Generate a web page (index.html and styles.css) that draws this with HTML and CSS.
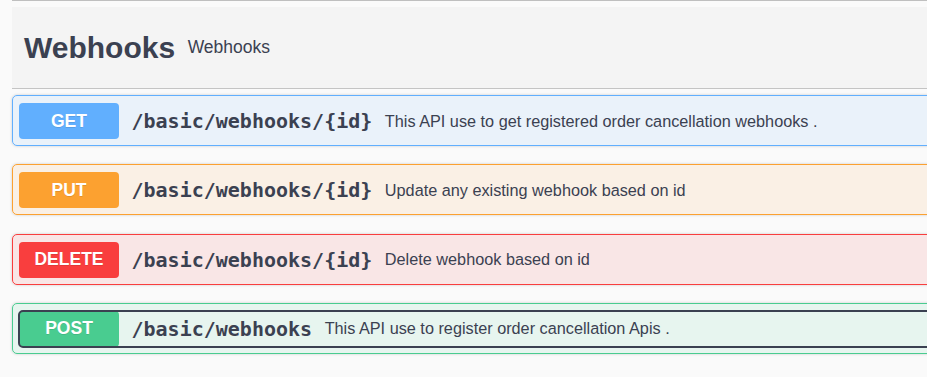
FILE: index.html
```html
<!DOCTYPE html>
<html lang="en">
<head>
  <meta charset="UTF-8">
  <meta name="viewport" content="width=device-width, initial-scale=1.0">
  <title>Webhooks</title>
  <link rel="stylesheet" href="styles.css">
</head>
<body>
  <div class="wrapper">
    <!-- end of previous tag section -->
    <div class="divider"></div>

    <!-- Tag header -->
    <div class="tag">
      <h4 class="tag-title">Webhooks</h4>
      <small class="tag-desc">Webhooks</small>
    </div>

    <!-- Operations -->
    <div class="operations">
      <div class="opblock get">
        <div class="summary">
          <span class="method">GET</span>
          <span class="path">/basic/webhooks/{id}</span>
          <span class="desc">This API use to get registered order cancellation webhooks .</span>
        </div>
      </div>

      <div class="opblock put">
        <div class="summary">
          <span class="method">PUT</span>
          <span class="path">/basic/webhooks/{id}</span>
          <span class="desc">Update any existing webhook based on id</span>
        </div>
      </div>

      <div class="opblock delete">
        <div class="summary">
          <span class="method">DELETE</span>
          <span class="path">/basic/webhooks/{id}</span>
          <span class="desc">Delete webhook based on id</span>
        </div>
      </div>

      <div class="opblock post">
        <div class="summary focused">
          <span class="method">POST</span>
          <span class="path">/basic/webhooks</span>
          <span class="desc">This API use to register order cancellation Apis .</span>
        </div>
      </div>
    </div>
  </div>
</body>
</html>
```

FILE: styles.css
```css
body {
  margin: 0;
  background: #fafafa;
  font-family: "Liberation Sans", Arial, sans-serif;
  color: #3b4151;
  overflow: hidden;
}
.wrapper {
  padding-left: 12px;
  width: 980px;
}
.divider {
  border-top: 1px solid #bfbfbf;
}
.tag {
  display: flex;
  align-items: center;
  height: 81px;
  margin-top: 6px;
  padding: 0 12px;
  background: #f4f4f4;
  border-bottom: 1px solid #c4c4c4;
}
.tag-title {
  margin: 0;
  font-size: 30px;
  font-weight: bold;
}
.tag-desc {
  margin-left: 12.5px;
  font-size: 17.5px;
}
.operations {
  margin-top: 6px;
}
.opblock {
  padding: 7px 6px 6px;
  margin-bottom: 18.3px;
  border: 1px solid;
  border-radius: 5px;
  box-shadow: 0 0 3px rgba(0, 0, 0, 0.19);
}
.summary {
  display: flex;
  align-items: center;
  border-radius: 4px;
}
.summary.focused {
  outline: 2px solid #3b4151;
  outline-offset: -1px;
}
.method {
  display: flex;
  align-items: center;
  justify-content: center;
  width: 100px;
  height: 36px;
  flex-shrink: 0;
  border-radius: 4px;
  color: #fff;
  font-size: 17.5px;
  font-weight: bold;
  text-shadow: 0 1px 0 rgba(0, 0, 0, 0.1);
}
.path {
  padding: 0 12.5px;
  font-family: "DejaVu Sans Mono", monospace;
  font-size: 20px;
  font-weight: bold;
}
.desc {
  font-size: 16.25px;
}

.get {
  border-color: #61affe;
  background: rgba(97, 175, 254, 0.1);
}
.get .method {
  background: #61affe;
}
.put {
  border-color: #fca130;
  background: rgba(252, 161, 48, 0.1);
}
.put .method {
  background: #fca130;
}
.delete {
  border-color: #f93e3e;
  background: rgba(249, 62, 62, 0.1);
}
.delete .method {
  background: #f93e3e;
}
.post {
  border-color: #49cc90;
  background: rgba(73, 204, 144, 0.1);
}
.post .method {
  background: #49cc90;
}
```
